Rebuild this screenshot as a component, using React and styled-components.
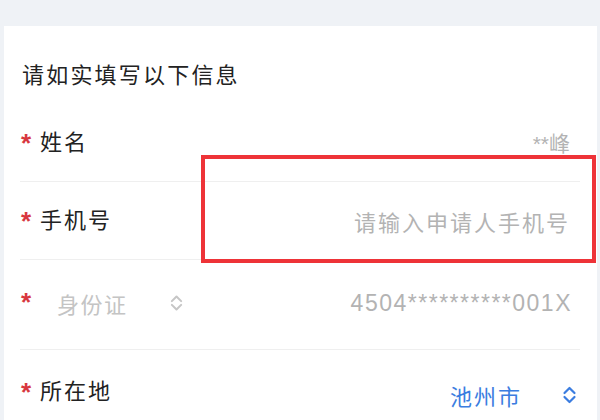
import React from 'react';
import styled, { createGlobalStyle } from 'styled-components';

const GlobalStyle = createGlobalStyle`
  html, body {
    margin: 0;
    padding: 0;
    background: #eff2f6;
    overflow: hidden;
  }
  body {
    font-family: "Noto Sans CJK SC", "Noto Sans", sans-serif;
  }
`;

const Page = styled.div`
  position: relative;
  width: 600px;
  height: 420px;
  overflow: hidden;
  padding-top: 26px;
  box-sizing: border-box;
  background: #eff2f6;
`;

const Card = styled.div`
  margin: 0 3px 0 4px;
  background: #fff;
  height: 420px;
`;

const Header = styled.div`
  height: 78px;
  box-sizing: border-box;
  padding: 32px 0 0 18px;
  font-size: 22px;
  line-height: 30px;
  letter-spacing: 2.2px;
  color: #222;
`;

const Row = styled.div`
  display: flex;
  align-items: center;
  height: ${(p) => p.$h || 78}px;
  margin: 0 17px 0 16px;
  padding: 0 10px 0 1px;
  border-bottom: ${(p) => (p.$last ? 'none' : '1px solid #efefef')};
  box-sizing: border-box;
`;

// $dy > 0 moves the star down, < 0 moves it up
const Star = styled.span`
  color: #d8373f;
  font-family: "Liberation Sans", sans-serif;
  font-size: 26px;
  font-weight: bold;
  width: 19px;
  line-height: 26px;
  margin-top: ${(p) => (p.$dy > 0 ? p.$dy * 2 : 0)}px;
  margin-bottom: ${(p) => (p.$dy < 0 ? -p.$dy * 2 : 0)}px;
  flex-shrink: 0;
`;

const Label = styled.span`
  font-size: 22px;
  letter-spacing: 2px;
  color: #222;
  line-height: 30px;
  margin-bottom: ${(p) => p.$raise ?? 6}px;
`;

const Select = styled.span`
  display: flex;
  align-items: center;
  gap: 42px;
  padding-left: 17px;
  font-size: 22px;
  letter-spacing: 1.5px;
  color: #c4c4c4;
  margin-bottom: 3px;
`;

const Value = styled.span`
  margin-left: auto;
  letter-spacing: ${(p) => p.$spacing ?? 2}px;
  color: ${(p) => p.$color || '#b3b3b3'};
  font-family: ${(p) => (p.$latin ? '"Liberation Sans", "Noto Sans CJK SC", sans-serif' : 'inherit')};
  font-size: ${(p) => p.$size || 22}px;
  white-space: nowrap;
  margin-top: ${(p) => p.$dy || 0}px;
  margin-right: ${(p) => p.$mr || 0}px;
`;

const Picker = styled.span`
  display: flex;
  align-items: center;
  gap: 40px;
  margin-left: auto;
  margin-right: -7px;
  margin-top: 10px;
  font-size: 22px;
  letter-spacing: 2px;
  color: #3b7de0;
`;

const Highlight = styled.div`
  position: absolute;
  left: 201px;
  top: 155px;
  width: 395px;
  height: 108px;
  border: 4px solid #ee3338;
  box-sizing: border-box;
  pointer-events: none;
`;

const Chevrons = ({ color, w = 14, h = 20 }) => (
  <svg width={w} height={h} viewBox="0 0 14 20" fill="none">
    <path d="M2 8 L7 3 L12 8" stroke={color} strokeWidth="2.2" strokeLinecap="round" strokeLinejoin="round" />
    <path d="M2 12 L7 17 L12 12" stroke={color} strokeWidth="2.2" strokeLinecap="round" strokeLinejoin="round" />
  </svg>
);

export default function App() {
  return (
    <>
      <GlobalStyle />
      <Page>
        <Card>
          <Header>请如实填写以下信息</Header>
          <Row>
            <Star>*</Star>
            <Label>姓名</Label>
            <Value $latin $spacing={0} $size={21} $dy={-2}>**峰</Value>
          </Row>
          <Row>
            <Star>*</Star>
            <Label>手机号</Label>
            <Value>请输入申请人手机号</Value>
          </Row>
          <Row $h={90}>
            <Star $dy={-3}>*</Star>
            <Select>
              身份证
              <Chevrons color="#c6c6c6" w={13} h={20} />
            </Select>
            <Value $latin $size={23} $spacing={1.5} $dy={-3} $mr={-2}>
              4504**********001X
            </Value>
          </Row>
          <Row $h={80} $last>
            <Star $dy={2}>*</Star>
            <Label $raise={2}>所在地</Label>
            <Picker>
              池州市
              <Chevrons color="#3b7de0" w={15} h={20} />
            </Picker>
          </Row>
        </Card>
        <Highlight />
      </Page>
    </>
  );
}
